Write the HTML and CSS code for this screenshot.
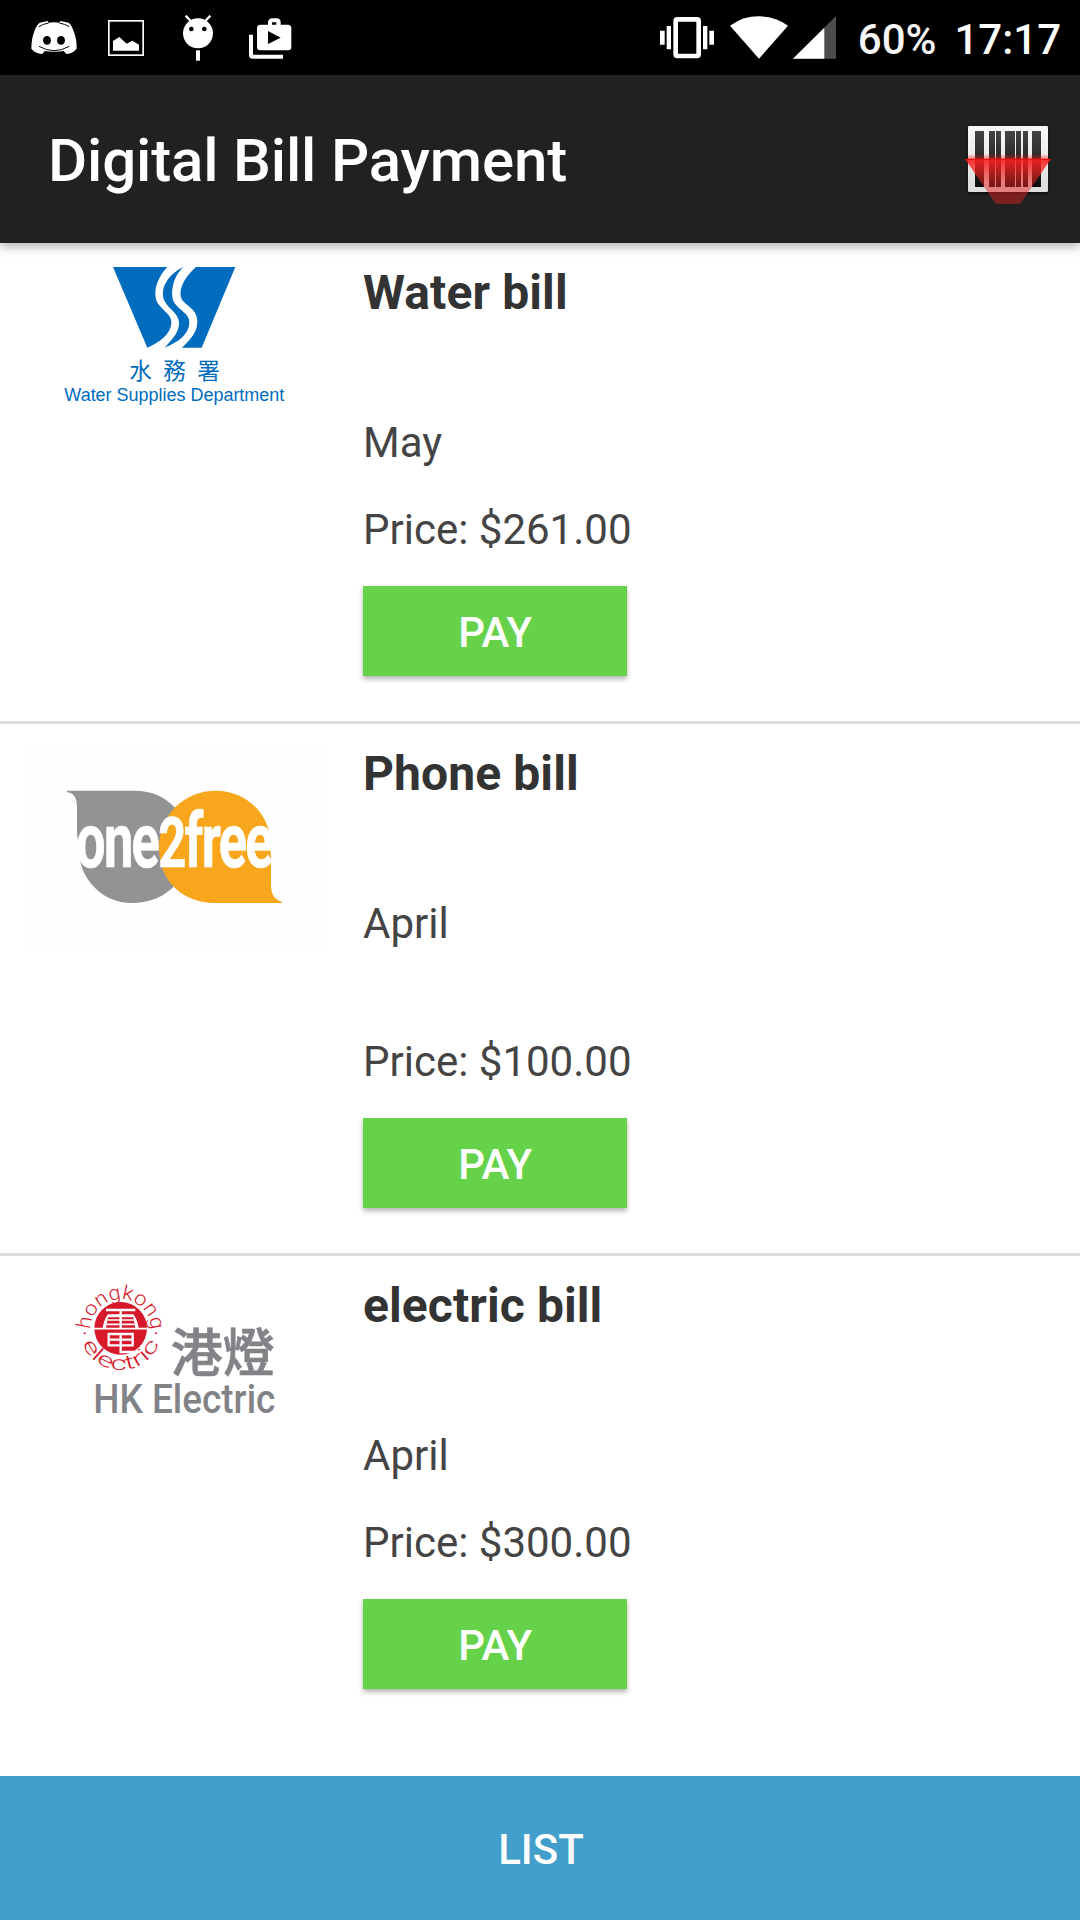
FILE: index.html
```
<!DOCTYPE html>
<html lang="en">
<head>
    <meta charset="UTF-8">
    <meta name="viewport" content="width=device-width, initial-scale=1.0">
    <title>Digital Bill Payment</title>
    <link rel="stylesheet" href="styles.css">
</head>
<body>
    <div class="status-bar">
        <div class="notifications">
            <svg class="discord" width="46" height="33" viewBox="93 63 138 99">
                <path fill="#fff" d="M119 68 L143 63 L146 68 Q162 66 178 68 L181 63 L206 68 Q213 72 218 86 Q231 115 230 146 Q219 160 199 162 L191 153 Q162 158 134 153 L127 162 Q105 160 94 146 Q94 112 107 84 Q113 72 119 68Z"/>
                <path fill="none" stroke="#000" stroke-width="3" d="M116 80 Q129 72 146 69 M178 69 Q195 72 208 80 M117 139 Q162 165 208 139"/>
                <ellipse cx="141" cy="121" rx="12" ry="13"/>
                <ellipse cx="183" cy="121" rx="12" ry="13"/>
            </svg>
            <svg class="picture" width="36" height="36" viewBox="324 60 108 108">
                <rect x="326.500" y="62.500" width="103" height="103" fill="none" stroke="#fff" stroke-width="5"/>
                <path fill="#fff" d="M339 152 V123 L358 111 L380 131 L397 122 L417 134 V152Z"/>
            </svg>
            <svg class="android" width="30" height="46" viewBox="549 46 90 138">
                <path stroke="#fff" stroke-width="7" d="M557 48 L572 64 M631 48 L616 64"/>
                <circle cx="594" cy="101" r="45" fill="#fff"/>
                <circle cx="574" cy="88" r="7"/>
                <circle cx="613" cy="88" r="7"/>
                <path fill="#fff" d="M588 152 H600 V183 H588Z"/>
            </svg>
            <svg class="play" width="43" height="41" viewBox="747 55 129 123">
                <path fill="none" stroke="#fff" stroke-width="12" d="M753 105 V165 Q753 171 759 171 H849"/>
                <path fill="#fff" fill-rule="evenodd" d="M781 75 H804 V67 Q806 56 817 56 H830 Q841 56 842 67 V75 H864 Q874 76 874 85 V143 Q874 152 864 152 H781 Q771 152 771 143 V85 Q771 76 781 75Z M816 68 V75 H829 V68Z M804 94 V133 L842 114Z"/>
            </svg>
        </div>
        <div class="system">
            <svg width="54" height="42" viewBox="60 49 162 126">
                <rect x="107" y="56" width="69" height="110" rx="5" fill="none" stroke="#fff" stroke-width="14"/>
                <path fill="#fff" d="M60 90 H74 V132 H60Z M80 76 H93 V146 H80Z M189 76 H202 V146 H189Z M208 90 H222 V132 H208Z"/>
            </svg>
            <svg width="58" height="43" viewBox="270 47 174 129">
                <path fill="#fff" d="M270 76 Q308 48 357 48 Q406 48 444 76 L357 175Z"/>
            </svg>
            <svg width="43" height="43" viewBox="459 49 129 129">
                <path fill="#4d4d4d" d="M588 49 V177 H459Z"/>
                <path fill="#fff" d="M553 84 V177 H459Z"/>
            </svg>
            <span class="battery">60%</span>
            <span class="clock">17:17</span>
        </div>
    </div>

    <div class="app-bar">
        <h1>Digital Bill Payment</h1>
        <svg class="scan" width="96" height="96" viewBox="60 33 288 288">
            <defs>
                <linearGradient id="plate" x1="0" y1="0" x2="0" y2="1">
                    <stop offset="0" stop-color="#f8f8f8"/>
                    <stop offset="1" stop-color="#dcdcdc"/>
                </linearGradient>
                <linearGradient id="bars" x1="0" y1="0" x2="0" y2="1">
                    <stop offset="0" stop-color="#444"/>
                    <stop offset="1" stop-color="#0c0c0c"/>
                </linearGradient>
                <linearGradient id="beam" x1="0" y1="0" x2="0" y2="1">
                    <stop offset="0" stop-color="#ff1c1c" stop-opacity="0.900"/>
                    <stop offset="0.500" stop-color="#f02020" stop-opacity="0.520"/>
                    <stop offset="1" stop-color="#e02020" stop-opacity="0.450"/>
                </linearGradient>
                <linearGradient id="glow" x1="0" y1="0" x2="0" y2="1">
                    <stop offset="0" stop-color="#f11" stop-opacity="0"/>
                    <stop offset="1" stop-color="#f11" stop-opacity="0.600"/>
                </linearGradient>
            </defs>
            <rect class="plate" x="84" y="78" width="240" height="198" rx="4" fill="url(#plate)"/>
            <path fill="url(#bars)" d="M105 93h27v168h-27z M147 93h18v168h-18z M168 93h15v168h-15z M195 93h30v168h-30z M228 93h15v168h-15z M249 93h15v168h-15z M276 93h27v168h-27z"/>
            <rect x="84" y="162" width="240" height="16" fill="url(#glow)"/>
            <path fill="url(#beam)" d="M75 177 H333 L240 312 H168Z"/>
            <path stroke="#e01010" stroke-width="3" d="M77 178 H331"/>
        </svg>
    </div>

    <div class="bills">
        <div class="bill">
            <svg class="logo" width="310" height="177" viewBox="0 9 930 531">
                <path fill="#006cbe" d="M279 81 H442 C405 120 396 170 418 196 C438 220 456 228 454 251 C451 282 420 306 382 323Z"/>
                <path fill="#006cbe" d="M490 81 C440 105 418 150 434 184 C450 212 475 220 477 247 C478 275 460 295 434 323 C475 306 507 285 508 247 C508 222 480 212 464 190 C448 165 458 110 490 81Z"/>
                <path fill="#006cbe" d="M528 81 H646 L545 323 H486 C515 295 533 275 532 241 C530 208 500 199 485 178 C474 150 490 115 528 81Z"/>
                <text class="wsd-zh" x="328" y="418">水務署</text>
                <text class="wsd-en" x="133" y="484" textLength="660">Water Supplies Department</text>
            </svg>
            <div class="info">
                <h2>Water bill</h2>
                <p>May</p>
                <p>Price: $261.00</p>
                <button>PAY</button>
            </div>
        </div>

        <div class="bill bill-tall">
            <svg class="logo" width="310" height="236" viewBox="0 -48 930 708">
                <rect x="14" y="24" width="897" height="612" fill="#fefefe"/>
                <path fill="#929395" d="M141 152 H345 C395 152 436 171 466 204 V434 C435 469 390 489 335 489 C245 489 177 415 177 330 L171 280 V205 C171 170 162 161 141 156Z"/>
                <path fill="#f8a61c" d="M785 489 H582 C486 489 417 420 417 325 C417 225 492 152 588 152 C675 152 740 215 750 290 L753 360 V430 C753 465 763 479 785 485Z"/>
                <text class="o2f" x="168" y="381" textLength="588" lengthAdjust="spacingAndGlyphs">one<tspan class="o2f-two">2</tspan>free</text>
            </svg>
            <div class="info">
                <h2>Phone bill</h2>
                <p>April</p>
                <p>Price: $100.00</p>
                <button>PAY</button>
            </div>
        </div>

        <div class="bill">
            <svg class="logo" width="310" height="200" viewBox="-90 -12 930 600">
                <defs>
                    <path id="ring-top" d="M121 209 A91 91 0 0 1 303 209"/>
                    <path id="ring-bottom" d="M92 234 A123 123 0 0 0 332 234"/>
                </defs>
                <circle cx="212" cy="205" r="79" fill="#d7182a"/>
                <path fill="none" stroke="#fff" stroke-width="5" d="M132 206 H292"/>
                <!-- sign inside the disc -->
                <path fill="none" stroke="#fff" stroke-width="7" d="M168 150 H256 M212 150 V204"/>
                <path fill="#fff" d="M174 163 H250 Q262 178 266 204 H256 L250 172 H174 L168 204 H158 Q162 178 174 163Z"/>
                <path fill="none" stroke="#fff" stroke-width="5" d="M172 180 H252 M170 193 H254"/>
                <path fill="none" stroke="#fff" stroke-width="7" d="M176 222 H248 V256 H176Z M176 239 H248 M212 222 V276 H256"/>
                <text class="hke-ring"><textPath href="#ring-top" textLength="286" lengthAdjust="spacingAndGlyphs">hongkong</textPath></text>
                <text class="hke-ring"><textPath href="#ring-bottom" startOffset="18" textLength="296" lengthAdjust="spacingAndGlyphs">electric</textPath></text>
                <circle cx="104" cy="220" r="3" fill="#d7182a"/>
                <circle cx="318" cy="220" r="3" fill="#d7182a"/>
                <text class="hke-zh" x="362" y="336">港燈</text>
                <text class="hke-en" x="130" y="460" textLength="546" lengthAdjust="spacingAndGlyphs">HK Electric</text>
            </svg>
            <div class="info">
                <h2>electric bill</h2>
                <p>April</p>
                <p>Price: $300.00</p>
                <button>PAY</button>
            </div>
        </div>
    </div>

    <button class="list-button">LIST</button>
</body>
</html>
```
FILE: styles.css
```
* {
    box-sizing: border-box;
}

body {
    display: flex;
    flex-direction: column;
    width: 1080px;
    height: 1920px;
    margin: 0;
    overflow: hidden;
    background: #fff;
    font-family: Roboto, sans-serif;
}

svg {
    display: block;
    flex: none;
}

.status-bar {
    display: flex;
    justify-content: space-between;
    height: 75px;
    padding: 0 19px 0 31px;
    background: #000;
    color: #fff;
    font-size: 42px;
    font-weight: 500;
}

.notifications,
.system {
    display: flex;
    align-items: center;
}

.picture {
    margin-left: 31px;
}

.android {
    margin-left: 39px;
}

.play {
    margin: 2px 0 0 36px;
}

.system {
    gap: 5px;
}

.system svg:first-child {
    margin-right: 11px;
}

.battery,
.clock {
    padding-top: 3px;
}

.battery {
    margin-left: 17px;
    color: #f5f5f5;
}

.clock {
    margin-left: 13px;
}

.app-bar {
    display: flex;
    align-items: center;
    justify-content: space-between;
    height: 168px;
    padding: 0 24px 0 48px;
    background: #212121;
    color: #fff;
    box-shadow: 0 4px 10px rgba(0, 0, 0, 0.3);
    z-index: 1;
}

.app-bar h1 {
    margin: 0;
    padding-top: 3px;
    font-size: 60px;
    font-weight: 500;
    letter-spacing: -0.15px;
}

.plate {
    filter: drop-shadow(0 5px 4px rgba(0, 0, 0, 0.7));
}

.bills {
    flex: 1;
}

.bill {
    display: flex;
    height: 481px;
    padding-left: 20px;
    border-bottom: 3px solid #ddd;
}

.bill-tall {
    height: 532px;
}

.bill:last-child {
    border-bottom: none;
}

.info {
    display: flex;
    flex-direction: column;
    align-items: flex-start;
    margin-left: 33px;
    padding-top: 22px;
}

.info h2 {
    margin: 0 0 97px;
    color: #333;
    font-size: 48px;
    line-height: 56px;
    letter-spacing: 0.1px;
}

.info p {
    margin: 0 0 38px;
    color: #444;
    font-size: 42px;
    line-height: 49px;
}

.bill-tall p:first-of-type {
    margin-bottom: 89px;
}

.info p:last-of-type {
    margin-bottom: 32px;
}

button {
    width: 264px;
    height: 90px;
    padding: 2px 0 0;
    border: none;
    background: #65d24a;
    color: #fff;
    font-family: inherit;
    font-size: 42px;
    font-weight: 500;
    letter-spacing: -0.4px;
    box-shadow: 0 3px 5px rgba(0, 0, 0, 0.3);
}

.list-button {
    width: 100%;
    height: 144px;
    padding-left: 2px;
    background: #429ecb;
    letter-spacing: 0;
    box-shadow: none;
}

/* logo lettering */
.wsd-zh {
    fill: #006cbe;
    font-family: "Noto Sans CJK TC", sans-serif;
    font-size: 68px;
    letter-spacing: 34px;
}

.wsd-en {
    fill: #006cbe;
    font-family: "Liberation Sans", sans-serif;
    font-size: 54px;
}

.o2f {
    fill: #fff;
    stroke: #fff;
    stroke-width: 2px;
    font-size: 226px;
    font-weight: 700;
    letter-spacing: -7px;
}

.o2f-two {
    font-size: 211px;
}

.hke-ring {
    fill: #d7182a;
    font-size: 60px;
    font-weight: 300;
}

.hke-zh {
    fill: #828387;
    font-family: "Noto Sans CJK TC", sans-serif;
    font-size: 156px;
    font-weight: 500;
    stroke: #828387;
    stroke-width: 2px;
}

.hke-en {
    fill: #828387;
    font-size: 120px;
    font-weight: 500;
}
```
